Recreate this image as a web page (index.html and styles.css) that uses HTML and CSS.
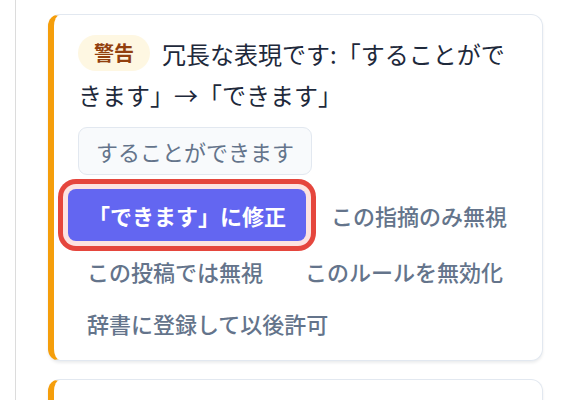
FILE: index.html
```html
<!DOCTYPE html>
<html lang="ja">
<head>
<meta charset="utf-8">
<title>指摘</title>
<link rel="stylesheet" href="styles.css">
</head>
<body>
<div class="panel">
  <div class="card">
    <p class="msg"><span class="badge">警告</span>冗長な表現です:「することができます」→「できます」</p>
    <div class="orig">することができます</div>
    <div class="actions">
      <button class="btn primary">「できます」に修正</button>
      <button class="btn ghost">この指摘のみ無視</button>
      <button class="btn ghost">この投稿では無視</button>
      <button class="btn ghost">このルールを無効化</button>
      <button class="btn ghost">辞書に登録して以後許可</button>
    </div>
  </div>
  <div class="card card-next"></div>
</div>
</body>
</html>
```
FILE: styles.css
```css
html, body {
  margin: 0;
  padding: 0;
  background: #ffffff;
  font-family: "Noto Sans CJK JP", "Noto Sans", sans-serif;
}

.panel {
  margin-left: 15px;
  border-left: 1px solid #dcdcdc;
  padding: 14px 33px 0 32px;
  min-height: 100vh;
  box-sizing: border-box;
}

.card {
  display: flex;
  flex-direction: column;
  background: #ffffff;
  border: 1px solid #e2e8f0;
  border-left: 6px solid #f59e0b;
  border-radius: 12px;
  padding: 18px 26px 15px 24px;
  box-shadow: 0 2px 3px rgba(15, 23, 42, 0.08);
  margin-bottom: 18px;
}

.card-next {
  min-height: 120px;
}

.msg {
  margin: 0;
  font-size: 24px;
  line-height: 41px;
  color: #1e293b;
}

.badge {
  display: inline-block;
  vertical-align: top;
  margin: 2px 12px 0 0;
  height: 36px;
  line-height: 36px;
  padding: 0 16px;
  border-radius: 18px;
  background: #fef7e2;
  color: #92400e;
  font-size: 20px;
  font-weight: 700;
}

.orig {
  align-self: flex-start;
  margin-top: 12px;
  padding: 8px 17px;
  font-size: 22px;
  line-height: 30px;
  border: 1px solid #e2e8f0;
  border-radius: 9px;
  background: #f8fafc;
  color: #64748b;
}

.actions {
  display: flex;
  flex-wrap: wrap;
  align-items: center;
  gap: 8px;
  margin: 14px -16px 0 -8px;
}

.btn {
  font-family: inherit;
  font-size: 22px;
  line-height: 30px;
  border: 0;
  background: none;
  border-radius: 8px;
  cursor: pointer;
  white-space: nowrap;
}

.primary {
  height: 52px;
  padding: 0 20px;
  margin-left: -2px;
  background: #6366f1;
  color: #ffffff;
  font-weight: 700;
  box-shadow: 0 0 0 5px #fde3e1, 0 0 0 10px #e5463d;
}

.ghost {
  height: 44px;
  padding: 0 17px;
  color: #64748b;
  font-weight: 500;
}
```
